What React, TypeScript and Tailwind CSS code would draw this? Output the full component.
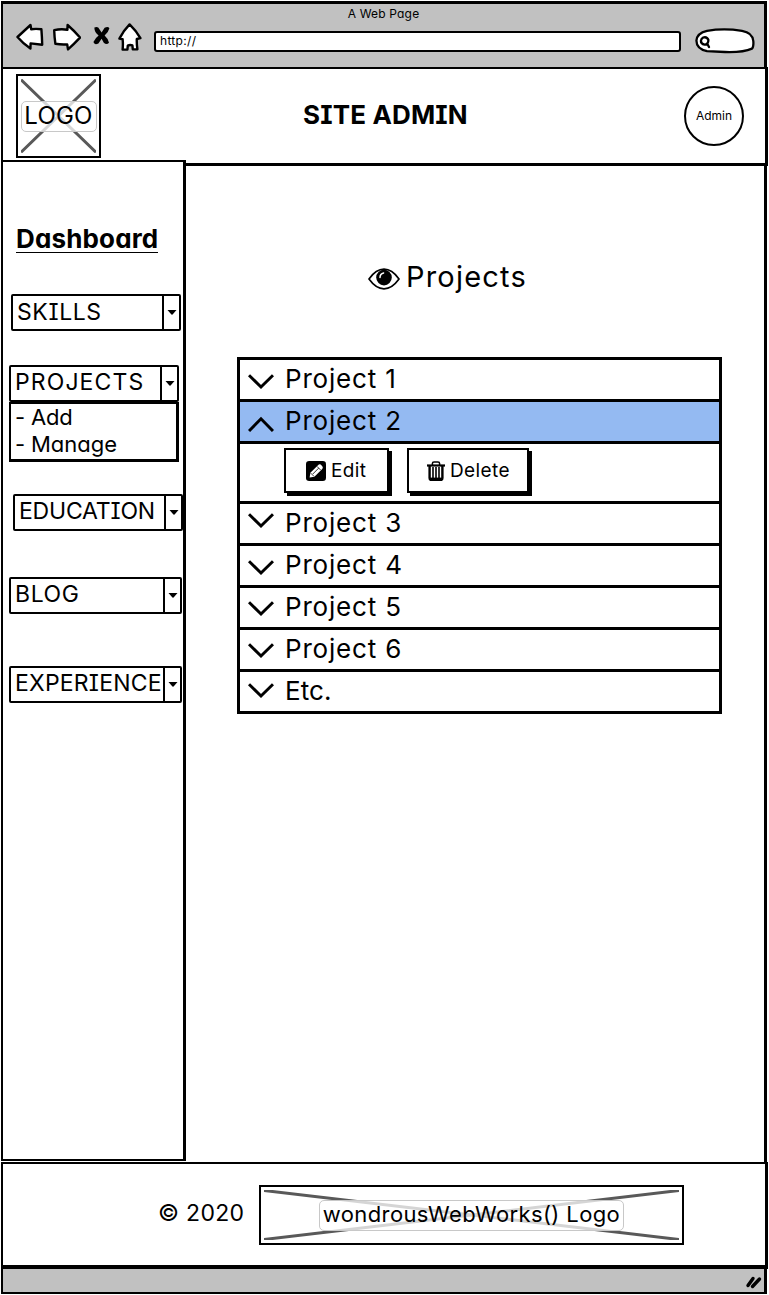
import type { ReactNode } from "react";

function BackIcon() {
  return (
    <svg viewBox="0 0 28 28" className="h-7 w-7" fill="#fff" stroke="#000" strokeWidth="2.4" strokeLinejoin="round">
      <path d="M1.5 14 L14.5 2 L15.2 6.2 Q20.5 5.6 25.4 6.3 Q26 14 26.2 21.8 L14.6 20.4 L14.4 25.6 Q7 20.5 1.5 14 Z" />
    </svg>
  );
}

function ForwardIcon() {
  return (
    <svg viewBox="0 0 28 28" className="h-7 w-7" fill="#fff" stroke="#000" strokeWidth="2.4" strokeLinejoin="round">
      <path d="M1.2 7.2 Q8 5.6 14.4 6.8 L14.6 2 Q21 7.5 27 14.6 Q21 21 15 26.4 L14.2 21.4 Q8 21.8 2.4 20.8 Q1.4 14 1.2 7.2 Z" />
    </svg>
  );
}

function StopIcon() {
  return (
    <svg viewBox="0 0 17 19" className="h-[19px] w-[17px]" fill="#000">
      <path d="M1.4 1.6 Q5 0 6.6 3.6 L8.6 6.6 L11.6 1.8 Q15 -0.2 16.4 2.2 Q15.5 6 11.6 9.6 Q15.4 13 16 16.8 Q13.6 19.4 10.8 16.8 L8.6 12.8 L5.4 17.4 Q1.4 19.4 0.4 16 Q2.4 12 5.6 9.6 Q1.2 6 1.4 1.6 Z" />
    </svg>
  );
}

function HomeIcon() {
  return (
    <svg viewBox="0 0 24 28" className="h-7 w-6" fill="#fff" stroke="#000" strokeWidth="2.4" strokeLinejoin="round">
      <path d="M11.6 1.4 Q18 7.5 22.4 15.2 L18.8 16 Q18.6 21 19.4 26.2 L14.8 26.4 L14.4 22.4 Q12 21.4 9.8 22.6 L9.4 26.6 L4.6 26.6 Q5.2 21 4.6 16.2 L1.4 15.6 Q5.5 7.6 11.6 1.4 Z" />
    </svg>
  );
}

function SearchPill() {
  return (
    <svg viewBox="0 0 60 26" className="h-[26px] w-[60px]" fill="#fff" stroke="#000" strokeWidth="2.3" strokeLinecap="round">
      <path d="M12 2.8 Q29 0 47 2.8 Q57.5 4.5 58.3 13 Q58.8 19 57 20.6 Q48 24.6 30 24 L12 23.2 Q1.4 21 1.4 12.6 Q2 5 12 2.8 Z" />
      <path d="M8.2 9.5 Q12 8.4 13.4 12 Q13.4 16.4 9.6 16.6 Q5.8 16 5.9 12.8 Q6.2 10.6 8.2 9.5 Z M12.4 16 L14 19" />
    </svg>
  );
}

function EyeIcon() {
  return (
    <svg viewBox="0 0 32 22" className="h-[22px] w-8">
      <path d="M1 11 Q8 1.2 16 1.2 Q24 1.2 31 11 Q24 20.8 16 20.8 Q8 20.8 1 11 Z" fill="#fff" stroke="#000" strokeWidth="1.7" strokeLinejoin="round" />
      <circle cx="16" cy="9.6" r="7.8" fill="#000" />
      <path d="M12 9.6 Q12 5.8 15.6 5" fill="none" stroke="#fff" strokeWidth="1.5" strokeLinecap="round" />
    </svg>
  );
}

function EditIcon() {
  return (
    <svg viewBox="0 0 20 20" className="h-5 w-5">
      <rect width="20" height="20" rx="3.2" fill="#000" />
      <path d="M3.6 16.6 L4.4 11.8 L12 4.2 Q13.8 2.4 15.6 4.4 Q17.8 6.3 16 8.2 L8.4 15.8 Z" fill="#fff" />
      <path d="M11 5.4 L14.8 9.2 M6.8 13 L12.6 7.2 M4.8 12.2 L8 15.4" stroke="#000" strokeWidth="0.8" />
    </svg>
  );
}

function TrashIcon() {
  return (
    <svg viewBox="0 0 18 20" className="h-5 w-[18px]" fill="none" stroke="#000">
      <path d="M0 4.5 H18" strokeWidth="2.2" />
      <path d="M5.4 4 V2.6 Q5.4 1 7 1 H11 Q12.6 1 12.6 2.6 V4" strokeWidth="1.5" />
      <path d="M2.6 5 V17 Q2.6 19 4.6 19 H13.4 Q15.4 19 15.4 17 V5" strokeWidth="2.4" />
      <path d="M6 6 V18 M9 6 V18 M12 6 V18" strokeWidth="1.6" />
      <path d="M3 18.2 H15" strokeWidth="3.2" />
    </svg>
  );
}

function Chevron({ up = false }: { up?: boolean }) {
  return (
    <svg viewBox="0 0 26 16" className="h-4 w-[26px]" fill="none" stroke="#000" strokeWidth="3">
      <path d={up ? "M1 15 L13 2.8 L25 15" : "M1 1.2 L13 13 L25 1.2"} />
    </svg>
  );
}

function Placeholder({ className, label }: { className: string; label: ReactNode }) {
  return (
    <div className={`relative flex items-center justify-center border-[2.5px] border-black bg-white ${className}`}>
      <svg className="absolute inset-[3px] h-[calc(100%-6px)] w-[calc(100%-6px)]" viewBox="0 0 100 100" preserveAspectRatio="none">
        <path d="M0 1 L100 99 M100 1 L0 99" stroke="#595959" strokeWidth="3" vectorEffect="non-scaling-stroke" />
      </svg>
      {label}
    </div>
  );
}

function Select({ label, className, text }: { label: string; className: string; text: string }) {
  return (
    <div className={`flex h-[37px] shrink-0 rounded-[2px] border-2 border-black bg-white ${className}`}>
      <div className={`flex-1 pl-[4px] text-[23px] whitespace-nowrap ${text}`}>{label}</div>
      <div className="flex w-[17px] shrink-0 items-center justify-center border-l-2 border-black">
        <svg viewBox="0 0 10 5" className="h-[5px] w-[10px]">
          <path d="M0.5 0 H9.5 Q7 3 5 5 Q3 3 0.5 0 Z" />
        </svg>
      </div>
    </div>
  );
}

function Row({ label, icon, text = "tracking-[0.81px]", className = "", up = false }: { label: string; icon: string; text?: string; className?: string; up?: boolean }) {
  return (
    <div className={`flex h-[42px] border-t-[3px] border-black pl-2 ${className}`}>
      <div className={icon}>
        <Chevron up={up} />
      </div>
      <span className={`pt-px pl-[11px] text-[26px] leading-[36px] ${text}`}>{label}</span>
    </div>
  );
}

function ActionButton({ className, children }: { className: string; children: ReactNode }) {
  return (
    <button className={`flex h-[45px] items-center gap-[5px] border-2 border-black bg-white text-[19px] shadow-[3px_3px_0_#000] ${className}`}>
      {children}
    </button>
  );
}

export default function App() {
  return (
    <div className="flex h-[1295px] w-[769px] flex-col overflow-hidden bg-white pt-px pl-px font-[Inter,sans-serif] text-black [font-feature-settings:'cv08','cv11']">
      <div className="h-[66px] w-[766px] shrink-0 border-t-[3px] border-r-[3px] border-l-2 border-black bg-[#c1c1c1]">
        <div className="h-[19px] text-center text-[12px] leading-[20px] tracking-[0.18px]">A Web Page</div>
        <div className="flex items-start">
          <div className="ml-[13px]"><BackIcon /></div>
          <div className="ml-[9px]"><ForwardIcon /></div>
          <div className="ml-[12px] pt-[3px]"><StopIcon /></div>
          <div className="ml-[8px]"><HomeIcon /></div>
          <div className="mt-[8px] ml-[12px] h-[21px] w-[527px] shrink-0 rounded-[3px] border-[2.3px] border-black bg-white pl-[4px] text-[12px] leading-[16px] tracking-[0.32px]">http://</div>
          <div className="mt-[5px] ml-[14px] shrink-0"><SearchPill /></div>
        </div>
      </div>

      <header className="flex h-[99px] w-[767px] shrink-0 items-start border-t-2 border-r-[3px] border-b-[3px] border-l-2 border-black bg-white pl-[13px]">
        <Placeholder
          className="mt-[5px] h-[84px] w-[85px] shrink-0"
          label={<span className="relative flex h-[31px] w-[76px] shrink-0 items-center justify-center rounded-[5px] border border-[#c8c8c8] bg-white/75 pb-px text-[24px] leading-none tracking-[0.2px]">LOGO</span>}
        />
        <h1 className="mt-[27px] ml-[202px] w-[381px] shrink-0 text-[26px] leading-[38px] font-bold tracking-[0.15px]">SITE ADMIN</h1>
        <div className="mt-[17px] flex h-[60px] w-[60px] shrink-0 items-center justify-center rounded-full border-2 border-black text-[12px]">Admin</div>
      </header>

      <div className="flex h-[996px] w-[766px] shrink-0 border-r-[3px] border-black">
        <aside className="relative -mt-[6px] flex h-[1001px] w-[185px] shrink-0 flex-col border-y-2 border-r-[3px] border-l-2 border-black bg-white">
          <h2 className="mt-[59px] ml-[13px] h-[32px] w-[142px] border-b border-black text-[26px] leading-[35px] font-bold tracking-[0.15px] whitespace-nowrap">Dashboard</h2>
          <Select label="SKILLS" className="mt-[41px] ml-[8px] w-[170px]" text="leading-[32px] tracking-[0.6px]" />
          <Select label="PROJECTS" className="mt-[34px] ml-[6px] w-[170px]" text="leading-[30px] tracking-[1.1px]" />
          <div className="ml-[6px] h-[60px] w-[170px] shrink-0 border-t-2 border-r-[3px] border-b-[3px] border-l-2 border-black pl-[4px] text-[22px] leading-[27px]">
            <div className="flex gap-[7px]"><span className="w-[9px]">-</span><span className="tracking-[-0.2px]">Add</span></div>
            <div className="flex gap-[7px]"><span className="w-[9px]">-</span><span>Manage</span></div>
          </div>
          <Select label="EDUCATION" className="mt-[32px] ml-[10px] w-[170px]" text="leading-[30px] tracking-[-0.2px]" />
          <Select label="BLOG" className="mt-[46px] ml-[6px] w-[173px]" text="leading-[30px] tracking-[0.61px]" />
          <Select label="EXPERIENCE" className="mt-[52px] ml-[6px] w-[173px]" text="leading-[30px] tracking-[0.2px]" />
        </aside>

        <main className="flex-1">
          <div className="mt-[93px] flex items-center pl-[182px]">
            <div className="pt-[3px]"><EyeIcon /></div>
            <h2 className="pl-[6px] text-[29px] leading-[36px] tracking-[1.2px]">Projects</h2>
          </div>
          <div className="mt-[62px] ml-[51px] w-[485px] border-x-[3px] border-b-[3px] border-black">
            <Row label="Project 1" icon="pt-[14px]" />
            <Row label="Project 2" icon="pt-[14px]" up className="bg-[#94baf2]" />
            <div className="flex h-[60px] gap-[18px] border-t-[3px] border-black pt-[4px] pl-[44px]">
              <ActionButton className="w-[105px] pl-[20px] tracking-[0.38px]">
                <EditIcon />
                <span className="pt-px">Edit</span>
              </ActionButton>
              <ActionButton className="w-[122px] pl-[18px] tracking-[0.4px]">
                <TrashIcon />
                <span className="pt-px">Delete</span>
              </ActionButton>
            </div>
            <Row label="Project 3" icon="pt-[9px]" />
            <Row label="Project 4" icon="pt-[14px]" />
            <Row label="Project 5" icon="pt-[13px]" />
            <Row label="Project 6" icon="pt-[13px]" />
            <Row label="Etc." icon="pt-[11px]" text="tracking-[0.1px]" />
          </div>
        </main>
      </div>

      <footer className="flex h-[107px] w-[767px] shrink-0 items-start border-t-2 border-r-[3px] border-b-[4px] border-l-2 border-black bg-white pl-[155px]">
        <span className="mt-[32px] w-[101px] shrink-0 text-[23px] leading-[34px] tracking-[0.3px]">© 2020</span>
        <Placeholder
          className="mt-[21px] h-[60px] w-[425px] shrink-0"
          label={<span className="relative flex h-[31px] w-[305px] shrink-0 items-center justify-center rounded-[5px] border border-[#c8c8c8] bg-white/75 pb-[2px] text-[22px] leading-none tracking-[0.38px] whitespace-nowrap">wondrousWebWorks() Logo</span>}
        />
      </footer>
      <div className="flex h-[25px] w-[766px] shrink-0 justify-end border-r-[3px] border-b-[2.5px] border-l-2 border-black bg-[#c1c1c1] pt-[6px] pr-[2px]">
        <svg viewBox="0 0 17 14" className="h-[14px] w-[17px]" stroke="#000" strokeWidth="3.4" strokeLinecap="round">
          <path d="M3 10.5 L8 3.5 M7.5 11.5 L14.5 4" />
        </svg>
      </div>
    </div>
  );
}
